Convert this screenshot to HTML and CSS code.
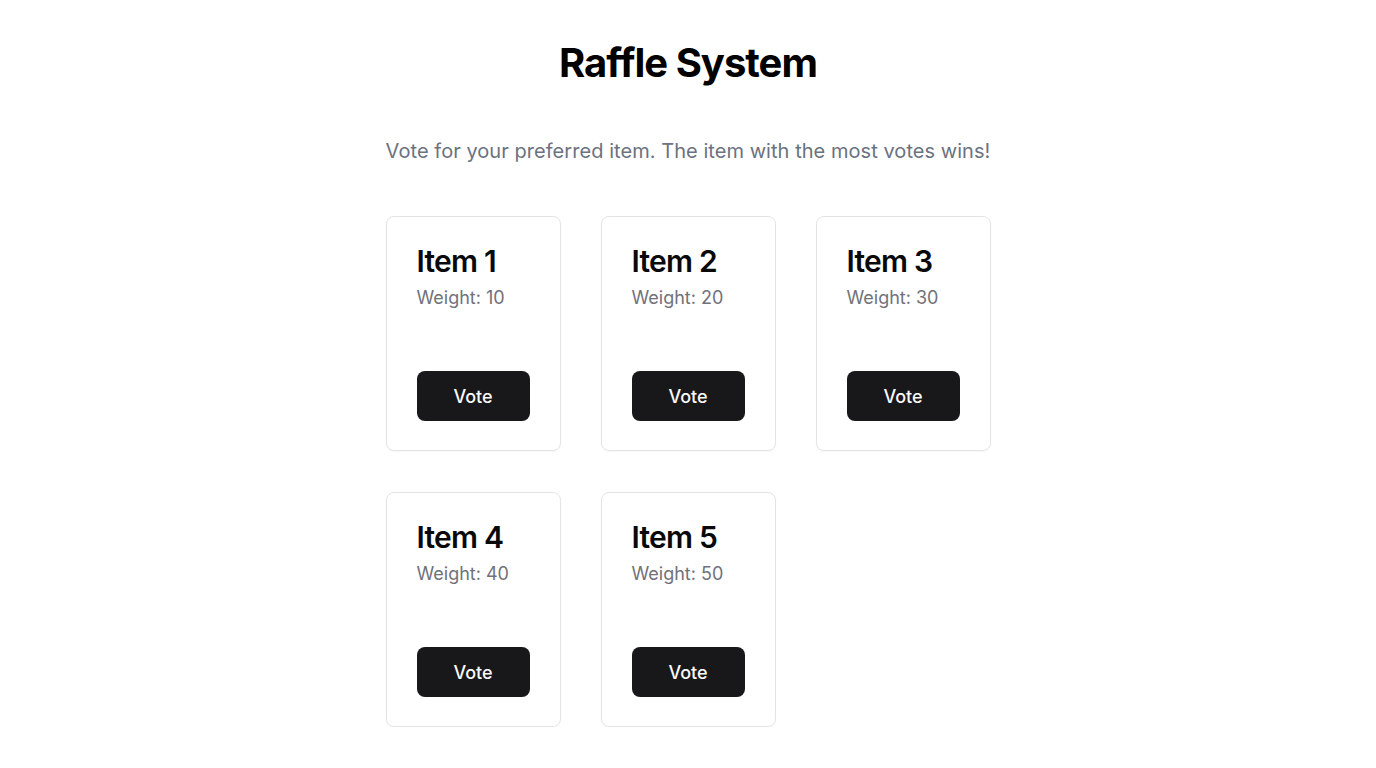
FILE: index.html
```html
<!DOCTYPE html>
<html lang="en">
<head>
<meta charset="utf-8">
<title>Raffle System</title>
<link rel="stylesheet" href="styles.css">
</head>
<body>
<main class="page">
  <h1 class="title">Raffle System</h1>
  <p class="subtitle">Vote for your preferred item. The item with the most votes wins!</p>
  <div class="grid">
    <div class="card"><h2 class="card-title">Item 1</h2><p class="weight">Weight: 10</p><button class="vote">Vote</button></div>
    <div class="card"><h2 class="card-title">Item 2</h2><p class="weight">Weight: 20</p><button class="vote">Vote</button></div>
    <div class="card"><h2 class="card-title">Item 3</h2><p class="weight">Weight: 30</p><button class="vote">Vote</button></div>
    <div class="card"><h2 class="card-title">Item 4</h2><p class="weight">Weight: 40</p><button class="vote">Vote</button></div>
    <div class="card"><h2 class="card-title">Item 5</h2><p class="weight">Weight: 50</p><button class="vote">Vote</button></div>
  </div>
</main>
</body>
</html>
```
FILE: styles.css
```css
* { box-sizing: border-box; }
html, body { margin: 0; padding: 0; background: #fff; }
body { font-family: Inter, "Noto Sans", sans-serif; color: #09090b; }
.page {
  width: 605px;
  margin: 0 auto;
  padding-top: 40px;
  display: flex;
  flex-direction: column;
}
.title {
  margin: 0;
  text-align: center;
  font-size: 40px;
  line-height: 46px;
  font-weight: 700;
  letter-spacing: -0.025em;
  color: #000;
}
.subtitle {
  margin: 51px 0 0;
  font-size: 20px;
  line-height: 28px;
  color: #6b7280;
  text-align: center;
  white-space: nowrap;
  letter-spacing: 0.05px;
}
.grid {
  margin-top: 51px;
  display: grid;
  grid-template-columns: repeat(3, 175px);
  column-gap: 40px;
  row-gap: 41px;
}
.card {
  height: 235px;
  border: 1px solid #e4e4e7;
  border-radius: 8px;
  padding: 30px 30px 29px;
  display: flex;
  flex-direction: column;
  align-items: flex-start;
  box-shadow: 0 1px 2px rgba(0,0,0,0.04);
}
.card-title {
  margin: 0;
  font-size: 30px;
  line-height: 28px;
  font-weight: 600;
  letter-spacing: -0.025em;
  color: #09090b;
}
.weight {
  margin: 9px 0 0;
  font-size: 18px;
  line-height: 28px;
  color: #71717a;
}
.vote {
  margin-top: auto;
  width: 113px;
  height: 50px;
  border: none;
  border-radius: 8px;
  background: #18181b;
  color: #fafafa;
  font-family: Inter, "Noto Sans", sans-serif;
  font-size: 18px;
  font-weight: 500;
  cursor: pointer;
}
```
